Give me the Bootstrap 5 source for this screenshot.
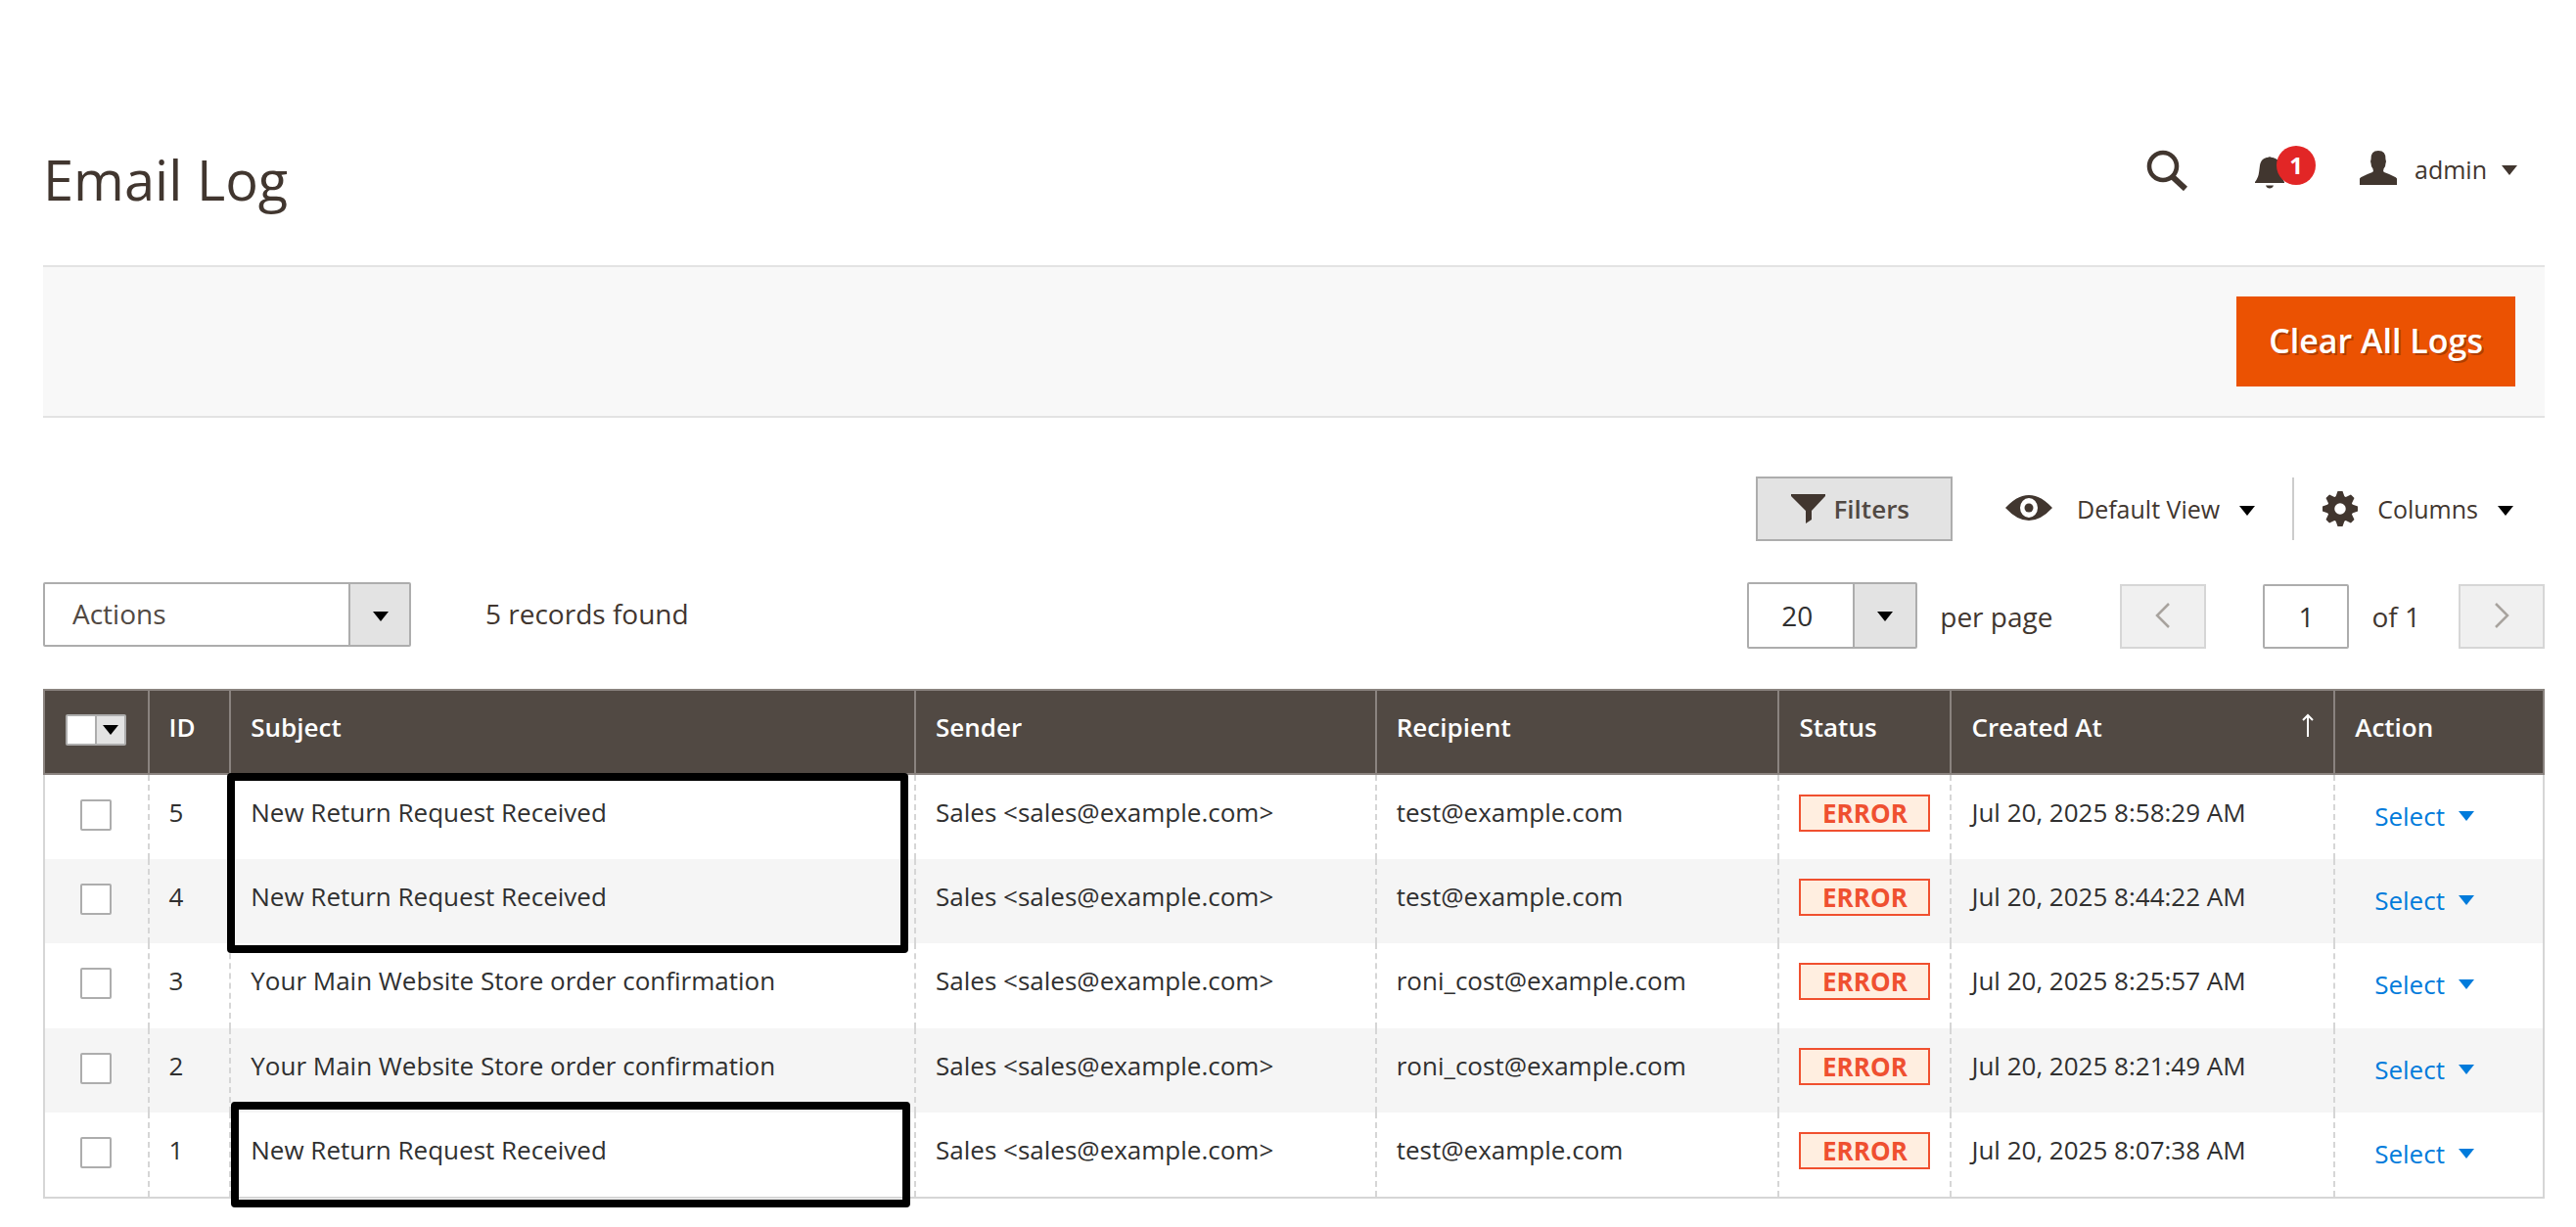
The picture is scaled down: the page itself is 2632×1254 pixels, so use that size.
<!DOCTYPE html>
<html lang="en">
<head>
<meta charset="utf-8">
<meta name="viewport" content="width=device-width, initial-scale=1">
<title>Email Log</title>
<link href="https://cdn.jsdelivr.net/npm/bootstrap@5.3.0/dist/css/bootstrap.min.css" rel="stylesheet">
<style>
body{font-family:"Open Sans","Noto Sans",sans-serif;font-size:26px;line-height:36px;color:#41362f;background:#fff}
.page-wrap{padding:0 32px 28px 44px}
.page-top{padding:132px 28px 0 0;height:271px}
.page-title{font-size:56px;line-height:68px;margin:17px 0 0;font-weight:400}
.tool-btn{background:none;border:0;padding:0;color:inherit;display:flex;align-items:center}
.tool-btn svg,.caret{display:block;flex:none}
.top-tools{padding-top:21px;font-size:25px}
.tool-bell{margin-left:69px}
.tool-user{margin-left:77px}
.tool-user span{margin:0 15px 2px 18px}
.bell-count{position:absolute;left:22px;top:-4px;width:40px;height:40px;border-radius:20px;background:#e22626;color:#fff;font-size:24px;font-weight:700;line-height:40px;text-align:center}
.action-bar{background:#f8f8f8;border-top:2px solid #e3e3e3;border-bottom:2px solid #e3e3e3;padding:30px}
.btn-clear{background:#eb5202;color:#fff;border:0;border-radius:0;font-size:34px;font-weight:600;line-height:44px;padding:23px 33px 25px;text-shadow:2px 2px 0 rgba(0,0,0,.25)}
.btn-clear:hover{background:#ba4000;color:#fff}
.view-row{padding-top:60px}
.view-row .caret{margin-top:4px;fill:#000}
.btn-filters{background:#e3e3e3;border:2px solid #adadad;height:66px;padding:0 42px 0 34px;color:#514943;font-weight:600}
.btn-view{height:64px;font-size:25px;gap:20px}
.btn-default{margin-left:54px}
.btn-default span{margin-left:5px}
.btn-columns{margin-left:38px;border-left:2px solid #ccc;padding:0 32px 0 29px}
.list-row{padding-top:42px}
.pick{appearance:none;border:2px solid #adadad;border-radius:2px;background-color:#fff;font-size:28px;line-height:40px;color:#303030;background-repeat:no-repeat;
 background-image:url("data:image/svg+xml,%3Csvg xmlns='http://www.w3.org/2000/svg' width='64' height='64'%3E%3Cpath fill='%23e3e3e3' d='M0 0h64v64H0z'/%3E%3Cpath fill='%23adadad' d='M0 0h2v64H0z'/%3E%3Cpath d='M25 28h16l-8 10z'/%3E%3C/svg%3E");background-position:right top}
.pick-actions{width:376px;height:66px;padding:0 70px 2px 28px;color:#514943;background-position:right -2px top}
.pick-size{width:174px;height:68px;padding:0 70px 0 33px}
.rec,.pager{font-size:28px}
.rec{gap:76px;line-height:64px}
.pager label{line-height:66px}
.lbl-size{margin:0 69px 0 23px}
.lbl-page{margin-right:39px}
.pager-btn{width:88px;height:66px;border:2px solid #d6d6d6;background:#f0f0f0;padding:0;display:flex;align-items:center;justify-content:center}
.pager-btn svg{margin-bottom:2px}
.pager-in{width:88px;height:66px;margin:0 23px 0 58px;border:2px solid #adadad;border-radius:2px;text-align:center;color:#303030;font-size:28px}
.grid-wrap{position:relative;margin-top:41px}
.log-grid{width:100%;border-collapse:collapse;table-layout:fixed;color:#303030}
.log-grid th{background:#514943;color:#fff;font-weight:600;border:2px solid #8a837f;height:86px;padding:19px 20px;vertical-align:top}
.log-grid td{height:86px;padding:20px 20px 19px;vertical-align:top;border-left:2px dashed #d6d6d6;border-right:2px dashed #d6d6d6}
.log-grid td:first-child{border-left-style:solid}
.log-grid td:last-child{border-right-style:solid}
.log-grid tbody tr:last-child{border-bottom:2px solid #d6d6d6}
.log-grid tbody tr:nth-child(odd) td{height:87px}
.log-grid tbody tr:nth-child(even){background:#f5f5f5}
.sort-arrow{margin-top:4px}
.tick{appearance:none;display:block;width:32px;height:32px;margin:5px auto 0;border:2px solid #adadad;border-radius:2px;background:#fff}
.tick:checked{background:#514943}
.multi{width:62px;height:32px;margin:5px auto 0}
.multi .tick{margin:0;border-radius:2px 0 0 2px}
.multi button{width:32px;height:32px;margin-left:-2px;border:2px solid #adadad;border-radius:0 2px 2px 0;background:#e3e3e3;padding:0 6px}
.state{display:block;border:2px solid #f0502f;background:#ffeee0;color:#ef5030;font-weight:700;line-height:34px;text-align:center}
.pick-row{display:inline-flex;align-items:center;gap:14px;color:#007bdb;fill:#007bdb;text-decoration:none;margin:4px 0 0 20px}
.hl{position:absolute;border:8px solid #000;border-radius:4px;pointer-events:none}
.hl-a{left:188px;width:696px;top:86px;height:184px}
.hl-b{left:192px;width:694px;top:422px;height:108px}
</style>
</head>
<body>
<svg class="d-none" aria-hidden="true"><symbol id="car" viewBox="0 0 16 10"><path d="M0 0h16L8 10z"/></symbol></svg>
<div class="page-wrap">
<header class="page-top d-flex justify-content-between align-items-start">
 <h1 class="page-title">Email Log</h1>
 <div class="top-tools d-flex align-items-start">
  <button class="tool-btn" aria-label="Search"><svg width="42" height="42" viewBox="0 0 42 42"><circle cx="17" cy="17" r="14" fill="none" stroke="#41362f" stroke-width="4.6"/><path d="M26 27l14 13" stroke="#41362f" stroke-width="6"/></svg></button>
  <button class="tool-btn tool-bell position-relative" aria-label="Notifications"><svg width="30" height="42" viewBox="0 0 30 42" fill="#41362f"><path d="M0 33c4-5 4-9 5-17 1-6 5-8 8-8a2.500 2 0 0 1 4 0c3 0 8 2 9 8 1 8 1 12 4 17v1H0zM11 36.500h8q-1 3-4 3t-4-3z"/></svg><span class="bell-count">1</span></button>
  <button class="tool-btn tool-user"><svg width="38" height="42" viewBox="0 0 38 42" fill="#41362f"><path d="M0 36v-6.500q1-2 13-6.500 1.500-1 .5-3.500-2-2-2-5.500-1-2 0-4Q11 1 19 1t7.500 9q1 2 0 4 0 3.500-2 5.500-1 2.500.5 3.500 12 4.500 13 6.500V36z"/></svg><span>admin</span><svg class="caret" width="16" height="10" fill="#41362f"><use href="#car"/></svg></button>
 </div>
</header>
<div class="action-bar d-flex justify-content-end"><button class="btn btn-clear">Clear All Logs</button></div>
<div class="view-row d-flex justify-content-end align-items-center">
 <button class="tool-btn btn-filters"><svg width="36" height="32" viewBox="0 0 36 32" fill="#41362f"><path d="M0 1h35v2L21 18v9l-6 4V18L0 3z"/></svg><span class="ms-2">Filters</span></button>
 <button class="tool-btn btn-view btn-default"><svg width="48" height="28" viewBox="0 0 48 28"><path fill="#41362f" fill-rule="evenodd" d="M0 13Q12 0 24 0t24 13Q36 26 24 26T0 13zm24-10a9 10 0 1 0 0 20 9 10 0 0 0 0-20z"/><circle cx="24" cy="13" r="4.500" fill="#41362f"/></svg><span>Default View</span><svg class="caret" width="16" height="10"><use href="#car"/></svg></button>
 <button class="tool-btn btn-view btn-columns"><svg width="36" height="36" viewBox="-18 -18 36 36"><g fill="#41362f"><circle r="9.500" fill="none" stroke="#41362f" stroke-width="7.500"/><g id="teeth"><path d="M-5-11l2.500-7h5l2.500 7zM-5 11l2.500 7h5l2.500-7zM-11-5l-7 2.500v5l7 2.500zM11-5l7 2.500v5l-7 2.500z"/></g><use href="#teeth" transform="rotate(45)"/></g></svg><span>Columns</span><svg class="caret" width="16" height="10"><use href="#car"/></svg></button>
</div>
<div class="list-row d-flex justify-content-between align-items-start">
 <div class="rec d-flex align-items-start"><select class="pick pick-actions" aria-label="Actions"><option>Actions</option></select><span>5 records found</span></div>
 <div class="pager d-flex align-items-end">
  <select class="pick pick-size" id="size"><option>20</option></select><label class="lbl-size" for="size">per page</label>
  <button class="pager-btn" disabled aria-label="Previous"><svg width="16" height="26" viewBox="0 0 16 26"><path d="M14 1L2 13l12 12" fill="none" stroke="#a8a39e" stroke-width="2.500"/></svg></button>
  <input class="pager-in" id="pg" value="1"><label class="lbl-page" for="pg">of 1</label>
  <button class="pager-btn" disabled aria-label="Next"><svg width="16" height="26" viewBox="0 0 16 26"><path d="M2 1l12 12L2 25" fill="none" stroke="#a8a39e" stroke-width="2.500"/></svg></button>
 </div>
</div>
<div class="grid-wrap">
<table class="log-grid">
<colgroup><col style="width:4.170%"><col style="width:3.280%"><col style="width:27.400%"><col style="width:18.430%"><col style="width:16.120%"><col style="width:6.890%"><col style="width:15.340%"><col></colgroup>
<thead><tr><th><div class="multi d-flex"><input class="tick" type="checkbox" aria-label="Select all"><button aria-label="Selection options"><svg class="caret" width="16" height="10"><use href="#car"/></svg></button></div></th><th>ID</th><th>Subject</th><th>Sender</th><th>Recipient</th><th>Status</th><th><div class="d-flex justify-content-between"><span>Created At</span><svg class="sort-arrow" width="12" height="24" viewBox="0 0 12 24"><path d="M6 24V3" stroke="#fff" stroke-width="2"/><path d="M1 7l5-5 5 5" fill="none" stroke="#fff" stroke-width="2"/></svg></div></th><th>Action</th></tr></thead>
<tbody>
<tr><td><input class="tick" type="checkbox" aria-label="Select 5"></td><td>5</td><td>New Return Request Received</td><td>Sales &lt;sales@example.com&gt;</td><td>test@example.com</td><td><span class="state">ERROR</span></td><td>Jul 20, 2025 8:58:29 AM</td><td><a class="pick-row" href="#">Select<svg class="caret" width="16" height="10"><use href="#car"/></svg></a></td></tr>
<tr><td><input class="tick" type="checkbox" aria-label="Select 4"></td><td>4</td><td>New Return Request Received</td><td>Sales &lt;sales@example.com&gt;</td><td>test@example.com</td><td><span class="state">ERROR</span></td><td>Jul 20, 2025 8:44:22 AM</td><td><a class="pick-row" href="#">Select<svg class="caret" width="16" height="10"><use href="#car"/></svg></a></td></tr>
<tr><td><input class="tick" type="checkbox" aria-label="Select 3"></td><td>3</td><td>Your Main Website Store order confirmation</td><td>Sales &lt;sales@example.com&gt;</td><td>roni_cost@example.com</td><td><span class="state">ERROR</span></td><td>Jul 20, 2025 8:25:57 AM</td><td><a class="pick-row" href="#">Select<svg class="caret" width="16" height="10"><use href="#car"/></svg></a></td></tr>
<tr><td><input class="tick" type="checkbox" aria-label="Select 2"></td><td>2</td><td>Your Main Website Store order confirmation</td><td>Sales &lt;sales@example.com&gt;</td><td>roni_cost@example.com</td><td><span class="state">ERROR</span></td><td>Jul 20, 2025 8:21:49 AM</td><td><a class="pick-row" href="#">Select<svg class="caret" width="16" height="10"><use href="#car"/></svg></a></td></tr>
<tr><td><input class="tick" type="checkbox" aria-label="Select 1"></td><td>1</td><td>New Return Request Received</td><td>Sales &lt;sales@example.com&gt;</td><td>test@example.com</td><td><span class="state">ERROR</span></td><td>Jul 20, 2025 8:07:38 AM</td><td><a class="pick-row" href="#">Select<svg class="caret" width="16" height="10"><use href="#car"/></svg></a></td></tr>
</tbody></table>
<div class="hl hl-a"></div><div class="hl hl-b"></div>
</div>
</div>
<script src="https://cdn.jsdelivr.net/npm/bootstrap@5.3.0/dist/js/bootstrap.bundle.min.js"></script>
</body>
</html>
